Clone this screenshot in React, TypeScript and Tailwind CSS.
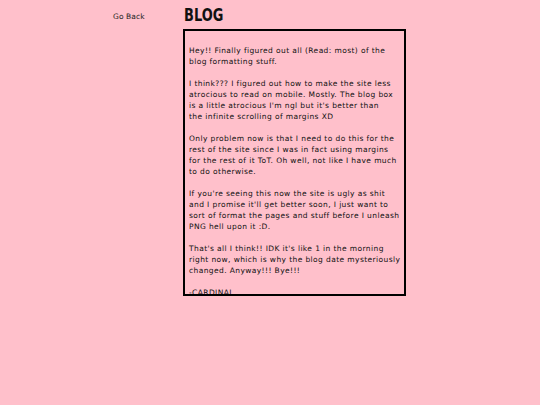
export default function App() {
  const paragraphs = [
    [
      "Hey!! Finally figured out all (Read: most) of the",
      "blog formatting stuff.",
    ],
    [
      "I think??? I figured out how to make the site less",
      "atrocious to read on mobile. Mostly. The blog box",
      "is a little atrocious I'm ngl but it's better than",
      "the infinite scrolling of margins XD",
    ],
    [
      "Only problem now is that I need to do this for the",
      "rest of the site since I was in fact using margins",
      "for the rest of it ToT. Oh well, not like I have much",
      "to do otherwise.",
    ],
    [
      "If you're seeing this now the site is ugly as shit",
      "and I promise it'll get better soon, I just want to",
      "sort of format the pages and stuff before I unleash",
      "PNG hell upon it :D.",
    ],
    [
      "That's all I think!! IDK it's like 1 in the morning",
      "right now, which is why the blog date mysteriously",
      "changed. Anyway!!! Bye!!!",
    ],
    ["-CARDINAL"],
  ];

  return (
    <div className="min-h-screen w-full bg-[#ffc0cb] text-[#1a1a1a] font-['DejaVu_Sans',sans-serif]">
      <div className="flex pl-[113px]">
        <a href="#" className="w-[70px] pt-[11px] text-[7.5px] leading-[11px] tracking-[0.1px] text-[#222]">
          Go Back
        </a>
        <div className="flex flex-col">
          <h1 className="h-[29px] pt-[6px] pl-[1px] text-[18px] leading-[18px] font-bold text-[#111]">
            <span className="inline-block origin-left scale-x-[0.72]">BLOG</span>
          </h1>
          <div className="w-[223px] h-[267px] border-2 border-black overflow-hidden pl-[4px] pt-[14px]">
            <div className="flex flex-col gap-[11px] text-[7.5px] leading-[11px] tracking-[0.4px] text-[#111]">
              {paragraphs.map((p, i) => (
                <p key={i} className="whitespace-nowrap">
                  {p.map((line, j) => (
                    <span key={j} className="block">
                      {line}
                    </span>
                  ))}
                </p>
              ))}
            </div>
          </div>
        </div>
      </div>
    </div>
  );
}
